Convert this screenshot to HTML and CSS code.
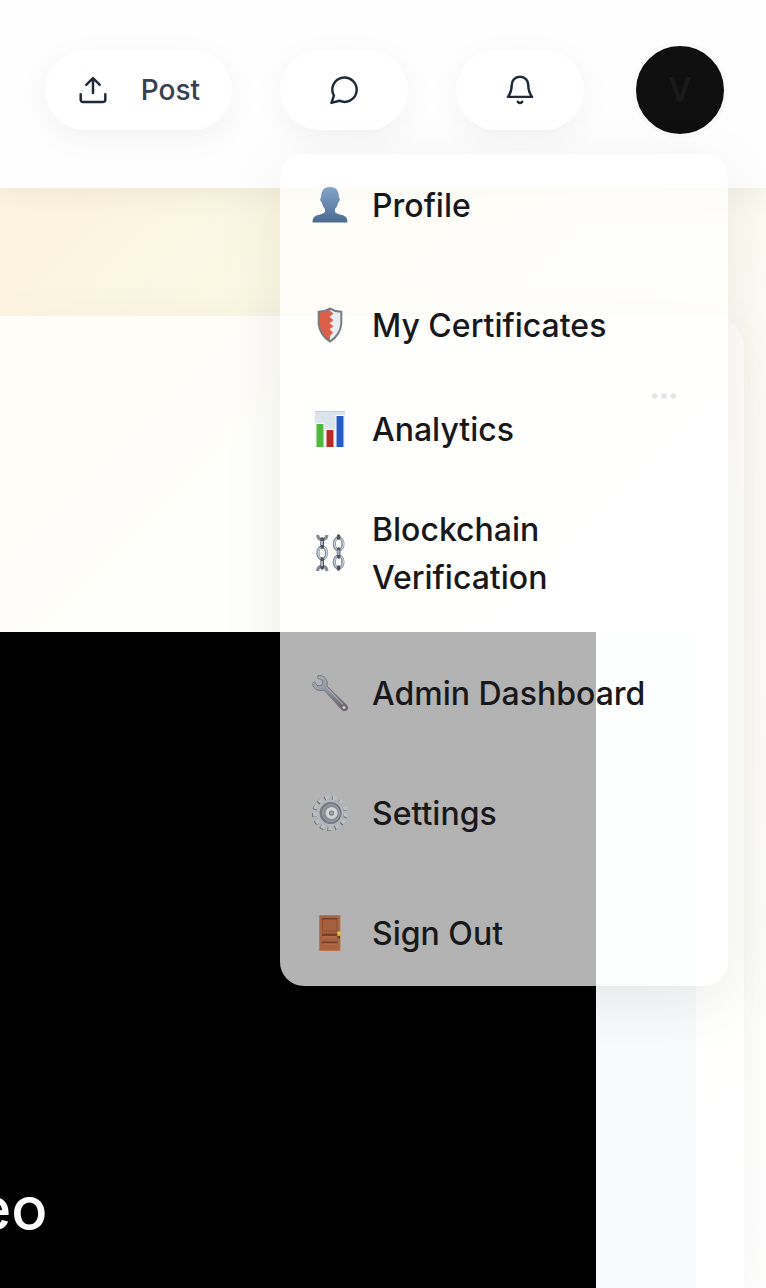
FILE: index.html
```html
<!DOCTYPE html>
<html lang="en">
<head>
<meta charset="utf-8">
<meta name="viewport" content="width=device-width, initial-scale=1">
<title>Feed</title>
<link rel="stylesheet" href="styles.css">
</head>
<body>
<header class="topbar">
  <button class="pill" type="button">
    <svg class="line-icon" viewBox="-1 -1 26 26" aria-hidden="true"><path d="M12 14.500V2.500M6.500 7.800L12 2.300l5.500 5.500M2 15.500v4.500a1.700 1.700 0 0 0 1.700 1.700h16.600a1.700 1.700 0 0 0 1.700-1.700v-4.500"/></svg>
    <span>Post</span>
  </button>
  <button class="pill pill-icon" type="button" aria-label="Messages">
    <svg class="line-icon" viewBox="-1 -1 26 26" aria-hidden="true"><path d="M3.800 16.600A9.900 9.900 0 1 1 8.200 20.700L1.800 22.500Z"/></svg>
  </button>
  <button class="pill pill-icon" type="button" aria-label="Notifications">
    <svg class="line-icon" viewBox="-1 -1 26 26" aria-hidden="true"><path d="M12 1.200c-4 0-6.700 2.900-6.700 6.600 0 4.300-.9 6.900-3.100 9.800h19.600c-2.200-2.900-3.100-5.500-3.100-9.800 0-3.700-2.700-6.600-6.700-6.600ZM10.200 21.600q1.800 1.800 3.600 0"/></svg>
  </button>
  <div class="account">
    <button class="avatar" type="button" aria-haspopup="true" aria-expanded="true">V</button>
    <nav class="menu" aria-label="Account">
      <a class="item" href="#">
        <svg class="emoji" viewBox="0 0 36 36" aria-hidden="true">
          <defs><linearGradient id="person" x2="0" y2="1"><stop stop-color="#86a5ca"/><stop offset="1" stop-color="#4b6a92"/></linearGradient></defs>
          <path fill="url(#person)" d="M18-1c5.500 0 8.800 3.300 8.800 9q0 1.500.8 2.200c.5 1.800-.3 3.300-1.400 4.300-.7 2.800-1.700 5-3.200 6.500v3c1 1.800 4 2.200 7 3 3.500.8 5.500 3 5.500 7.500H.5c0-4.500 2-6.700 5.500-7.500 3-.8 6-1.200 7-3v-3c-1.500-1.500-2.500-3.700-3.200-6.500-1.100-1-1.900-2.500-1.400-4.300q.8-.7.800-2.200c0-5.700 3.300-9 8.800-9Z"/>
        </svg>
        <span>Profile</span>
      </a>
      <a class="item gap-above" href="#">
        <svg class="emoji" viewBox="0 0 36 36" aria-hidden="true">
          <path fill="#e9edf2" d="M18 .6q5 3 11.300 3.200v12q-1 11-11.300 17.700Q7.700 26.800 6.700 15.800v-12q6.300-.2 11.300-3.200Z"/>
          <path fill="#dc6049" d="M18 .6v2.200l3.500 3-4 3 4 3.500-4 3 4 3-4 3 3.500 3.200-3 3.500v5.500Q7.700 26.800 6.700 15.800v-12q6.300-.2 11.300-3.200Z"/>
          <path fill="none" stroke="#777b80" stroke-width="2" d="M18 .6q5 3 11.300 3.200v12q-1 11-11.300 17.700Q7.700 26.800 6.700 15.800v-12q6.300-.2 11.300-3.200Z"/>
        </svg>
        <span>My Certificates</span>
      </a>
      <a class="item" href="#">
        <svg class="emoji" viewBox="0 0 36 36" aria-hidden="true">
          <path fill="#dce5ee" d="M3-1h30v36H3z"/>
          <path fill="none" stroke="#c3cbd3" d="M3-.5h30M3 34.500h30"/>
          <path fill="none" stroke="#d2dce6" stroke-width=".5" d="M8-1v36M13-1v36M18-1v36M23-1v36M3 6h30M3 12h30"/>
          <path fill="#fff" d="M3.500 11h9v24h-9zM13.500 17h9v18h-9zM23.500 3h9v32h-9z"/>
          <path fill="#50b83e" d="M4.500 12h7v23h-7z"/><path fill="#b92a24" d="M14.500 18h7v17h-7z"/><path fill="#255bc2" d="M24.500 4h7v31h-7z"/>
        </svg>
        <span>Analytics</span>
      </a>
      <a class="item" href="#">
        <svg class="emoji" viewBox="0 0 36 36" aria-hidden="true">
          <g fill="none" stroke="#828c98" stroke-width="3.200">
            <path d="M5.500-1c.5 3 2 4.500 4.700 4.500s4.300-1.500 4.800-4.500M5.500 35c.5-3.500 2-5 4.700-5s4.300 1.500 4.800 5"/>
            <ellipse cx="10.200" cy="17" rx="4.300" ry="6"/><ellipse cx="26.600" cy="8" rx="4.300" ry="6"/><ellipse cx="26.600" cy="26" rx="4.300" ry="6"/>
          </g>
          <g fill="none" stroke="#cddae6" stroke-width="1.200"><ellipse cx="10.500" cy="17" rx="4.400" ry="6"/><ellipse cx="26.900" cy="8" rx="4.400" ry="6"/><ellipse cx="26.900" cy="26" rx="4.400" ry="6"/></g>
          <path fill="none" stroke="#50525a" stroke-width="3.600" stroke-linecap="round" d="M10.200 3v8M10.200 23v9M26.600 0v2M26.600 13v8M26.600 31v2"/>
          <path fill="none" stroke="#a9b7c6" stroke-width="2" d="M10 5v4M10 25v5M26.400 14v5"/>
        </svg>
        <span>Blockchain Verification</span>
      </a>
      <a class="item gap-above" href="#">
        <svg class="emoji" viewBox="0 0 36 36" aria-hidden="true">
          <defs><linearGradient id="steel" x2="1" y2="1"><stop stop-color="#a9b4c1"/><stop offset=".35" stop-color="#929aa5"/><stop offset="1" stop-color="#66595d"/></linearGradient></defs>
          <path fill="url(#steel)" stroke="#697079" stroke-width=".8" d="M6-.5C11-1 15 2 15.300 7L15 10l20 19.500q2 3-.5 4.800-3 1.500-5-.8L12 14c-5 2-10.500-.5-11.500-6.500l2-2L5.500 10l4.500-1 1-4-5.500-3Z"/>
          <path fill="none" stroke="#b9bec5" stroke-width="1" d="M14.500 11.500 31 28.500"/>
          <circle cx="32" cy="31.500" r="1.600" fill="#cfcac9"/>
        </svg>
        <span>Admin Dashboard</span>
      </a>
      <a class="item gap-above" href="#">
        <svg class="emoji" viewBox="0 0 36 36" aria-hidden="true">
          <circle cx="17.600" cy="17.600" r="15.500" fill="none" stroke="#68615f" stroke-width="4" stroke-dasharray="3.900 3.592"/>
          <circle cx="18.400" cy="17" r="15.500" fill="none" stroke="#b9c0c7" stroke-width="4" stroke-dasharray="3.900 3.592"/>
          <circle cx="18.400" cy="17" r="13.500" fill="#b0b7be"/>
          <circle cx="18.600" cy="17" r="11" fill="#747a80"/>
          <circle cx="19" cy="17" r="8.600" fill="#868d94" stroke="#9ba1a7"/>
          <circle cx="19.600" cy="17" r="4.300" fill="#77706e" stroke="#ced4da" stroke-width="3.400"/>
          <circle cx="19.800" cy="17" r="1.800" fill="#a5a5a5"/>
        </svg>
        <span>Settings</span>
      </a>
      <a class="item gap-above" href="#">
        <svg class="emoji" viewBox="0 0 36 36" aria-hidden="true">
          <path fill="#a8623f" stroke="#b87653" d="M7.500-.5h20.500v35H7.500z"/>
          <path fill="#a6603e" stroke="#8a4f34" d="M10.500 2.500H25V15H10.500z"/>
          <path fill="#75402a" d="M10 2h15.500v1.500H10zM10 17.500h15.500V20H10zM10 25.500h15.500v2H10z"/>
          <path fill="#b36a46" d="M11 20h14v2H11zM11 27.500h14V29H11z"/>
          <path fill="#6b4225" d="M25.500 20h2.500v2.500h-2.500z"/><path fill="#d8b52d" d="M25.500 15.500h3V20h-3z"/><path fill="#f5e17a" d="M25.500 16.500h3v1h-3z"/>
        </svg>
        <span>Sign Out</span>
      </a>
    </nav>
  </div>
</header>
<main class="feed">
  <article class="card">
    <div class="card-head">
      <button class="more" type="button" aria-label="More options">
        <svg viewBox="0 0 24 8" aria-hidden="true"><circle cx="2.700" cy="4" r="2.700"/><circle cx="12" cy="4" r="2.700"/><circle cx="21.300" cy="4" r="2.700"/></svg>
      </button>
    </div>
    <div class="media">
      <div class="video"><span class="caption">eo</span></div>
    </div>
  </article>
</main>
</body>
</html>
```
FILE: styles.css
```css
* {
  box-sizing: border-box;
}

body {
  margin: 0;
  min-height: 100vh;
  display: flex;
  flex-direction: column;
  overflow-x: hidden;
  font-family: Inter, "Liberation Sans", sans-serif;
  font-size: 32px;
  line-height: 48px;
  color: #18181b;
  background: linear-gradient(135deg, #fef0e0 0%, #fcf4e1 14%, #fbf8e4 26%, #fcfaee 40%, #fefdf8 60%, #ffffff 100%);
}

button {
  border: 0;
  padding: 0;
  font: inherit;
  cursor: pointer;
}

.topbar {
  position: relative;
  z-index: 2;
  display: flex;
  justify-content: flex-end;
  align-items: center;
  gap: 48px;
  padding: 42px 38px 50px 0;
  background: #fefefe;
  box-shadow: 0 4px 32px rgba(0, 0, 0, 0.06);
}

.pill {
  display: flex;
  align-items: center;
  justify-content: center;
  gap: 32px;
  height: 80px;
  padding: 0 32px;
  border-radius: 40px;
  background: #ffffff;
  color: #374151;
  font-size: 28px;
  font-weight: 500;
  box-shadow: 0 8px 32px rgba(0, 0, 0, 0.05);
}

.pill-icon {
  width: 128px;
}

.line-icon {
  width: 32px;
  height: 32px;
  fill: none;
  stroke: #1f2937;
  stroke-width: 2;
  stroke-linecap: round;
  stroke-linejoin: round;
}

.account {
  position: relative;
}

.avatar {
  display: block;
  width: 96px;
  height: 96px;
  border: 4px solid #fafafc;
  border-radius: 50%;
  background: #0f0f0f;
  color: #1a1a1a;
  font-weight: 600;
}

.menu {
  position: absolute;
  top: calc(100% + 16px);
  right: 0;
  width: 448px;
  border-radius: 24px;
  background: rgba(255, 255, 255, 0.7);
  box-shadow: 0 16px 64px rgba(0, 0, 0, 0.08);
}

.item {
  display: flex;
  align-items: center;
  gap: 24px;
  min-height: 104px;
  padding: 24px 32px;
  color: #18181b;
  font-weight: 500;
  text-decoration: none;
}

.gap-above {
  margin-top: 16px;
}

.emoji {
  flex: none;
  width: 36px;
  height: 36px;
  overflow: visible;
}

.feed {
  flex: 1;
  display: flex;
  padding: 128px 22px 0 0;
}

.card {
  flex: 1;
  display: flex;
  flex-direction: column;
  padding-right: 48px;
  border-radius: 0 32px 0 0;
  background: rgba(255, 255, 255, 0.75);
  box-shadow: 0 16px 64px rgba(0, 0, 0, 0.05);
}

.card-head {
  display: flex;
  justify-content: flex-end;
  height: 316px;
  padding: 48px 0;
}

.more {
  display: grid;
  place-items: center;
  width: 64px;
  height: 64px;
  background: none;
}

.more svg {
  width: 24px;
  height: 8px;
  fill: #a5a8b4;
}

.media {
  flex: 1;
  display: flex;
  padding-right: 100px;
  background: #f8fafc;
}

.video {
  flex: 1;
  display: flex;
  align-items: flex-end;
  min-height: 656px;
  padding-bottom: 40px;
  overflow: hidden;
  background: #000000;
}

.caption {
  margin-left: -24px;
  color: #ffffff;
  font-size: 60px;
  font-weight: 500;
  line-height: 80px;
}
```
